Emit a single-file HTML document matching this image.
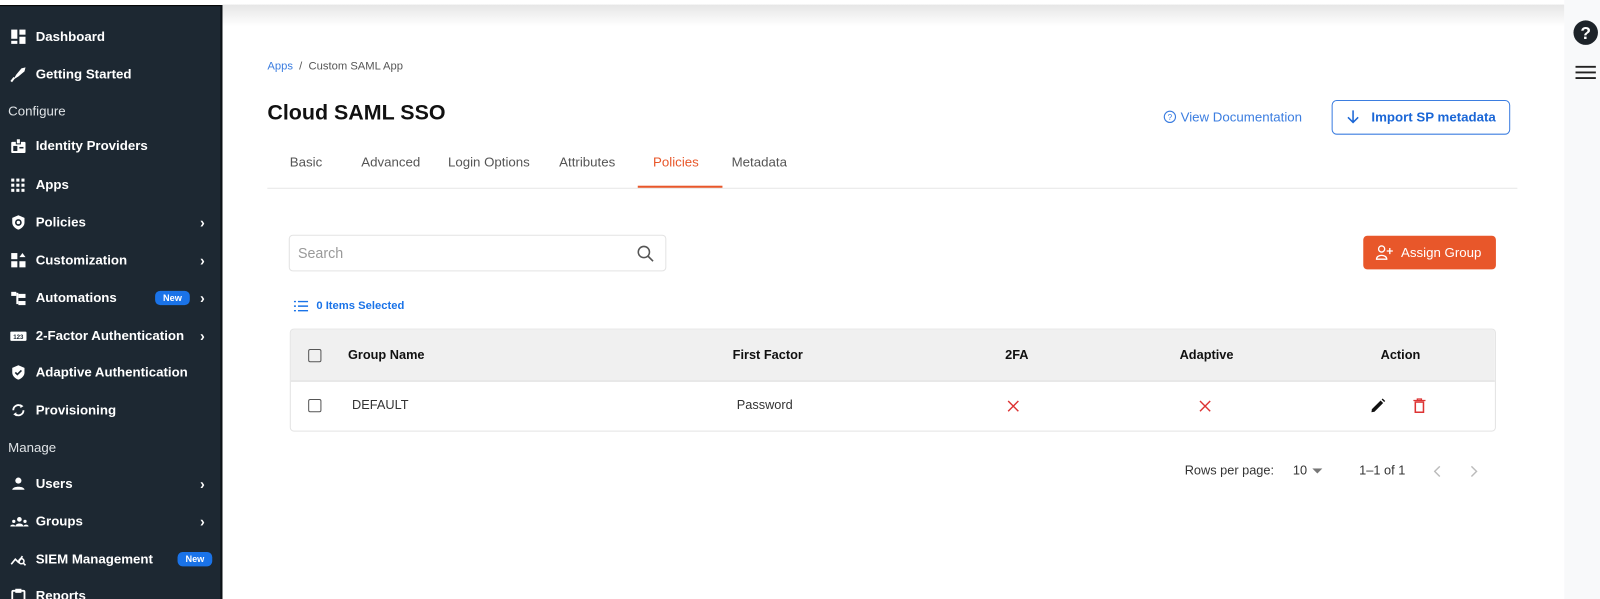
<!DOCTYPE html>
<html><head><meta charset="utf-8">
<style>
*{box-sizing:border-box;margin:0;padding:0}
html,body{width:1600px;height:599px;overflow:hidden;background:#fff}
body{font-family:"Liberation Sans",sans-serif;position:relative}
#w{position:absolute;left:0;top:0;width:1568px;height:587px;transform:scale(1.020408);transform-origin:0 0}
.topshadow{position:absolute;left:218px;top:0;width:1315px;height:28px;background:linear-gradient(#fff 0,#fff 4px,#e6e6e6 5px,#fff 26px)}
.side{position:absolute;left:0;top:5px;width:218px;height:594px;background:#1d2832;border-top:1px solid #000;border-right:2px solid #0c1116;color:#fff}
.it{position:absolute;left:0;width:216px;height:20px;font-size:13px;font-weight:bold;line-height:20px}
.it .t{position:absolute;left:35px;top:0}
.it svg{position:absolute;left:10px;top:2px}
.it .ch{position:absolute;left:196px;top:0;font-weight:bold;font-size:14px}
.sec{position:absolute;left:8px;font-size:13px;color:#dfe3e6}
.new{position:absolute;background:#1a73e8;color:#fff;font-size:9px;font-weight:bold;border-radius:5px;width:34px;height:14px;line-height:14px;text-align:center;top:3px}
.right{position:absolute;left:1533px;top:0;width:67px;height:599px;background:#f8f9fa}
.abs{position:absolute}
.tab{position:absolute;top:151px;font-size:13px;color:#555}
</style></head><body><div id="w">
<div class="topshadow"></div>
<div class="side">
 <div class="it" style="top:20px"><svg width="16" height="16"><rect x="1" y="1" width="6" height="9" fill="#fff"/><rect x="9" y="1" width="6" height="5" fill="#fff"/><rect x="1" y="12" width="6" height="3" fill="#fff"/><rect x="9" y="8" width="6" height="7" fill="#fff"/></svg><span class="t">Dashboard</span></div>
 <div class="it" style="top:57px"><svg width="16" height="16"><path d="M3 13 L6 8 L11 2 L15 1 L14 5 L8 10 Z" fill="#fff"/><path d="M1 15 L4 11" stroke="#fff" stroke-width="2"/></svg><span class="t">Getting Started</span></div>
 <div class="sec" style="top:95px">Configure</div>
 <div class="it" style="top:127px"><svg width="16" height="16"><rect x="1" y="4" width="14" height="11" rx="1" fill="#fff"/><rect x="6" y="1" width="4" height="5" fill="#fff" stroke="#1d2832"/><rect x="3" y="8" width="4" height="5" fill="#1d2832"/><rect x="9" y="9" width="4" height="1.5" fill="#1d2832"/></svg><span class="t">Identity Providers</span></div>
 <div class="it" style="top:165px"><svg width="16" height="16" fill="#fff"><rect x="1" y="2" width="3" height="3"/><rect x="6" y="2" width="3" height="3"/><rect x="11" y="2" width="3" height="3"/><rect x="1" y="7" width="3" height="3"/><rect x="6" y="7" width="3" height="3"/><rect x="11" y="7" width="3" height="3"/><rect x="1" y="12" width="3" height="3"/><rect x="6" y="12" width="3" height="3"/><rect x="11" y="12" width="3" height="3"/></svg><span class="t">Apps</span></div>
 <div class="it" style="top:202px"><svg width="16" height="16"><path d="M8 1 L14 3.5 V8 C14 11.5 11 14 8 15 C5 14 2 11.5 2 8 V3.5 Z" fill="#fff"/><circle cx="8" cy="8" r="2.5" fill="none" stroke="#1d2832" stroke-width="1.6"/></svg><span class="t">Policies</span><span class="ch">›</span></div>
 <div class="it" style="top:239px"><svg width="16" height="16" fill="#fff"><rect x="1" y="1" width="6" height="6"/><rect x="1" y="9" width="6" height="6"/><rect x="9" y="9" width="6" height="6"/><path d="M12 1 L15 5 L9 5 Z"/></svg><span class="t">Customization</span><span class="ch">›</span></div>
 <div class="it" style="top:276px"><svg width="16" height="16" fill="#fff"><rect x="1" y="2" width="5" height="4"/><rect x="8" y="4" width="7" height="4"/><rect x="8" y="11" width="7" height="4"/><rect x="6" y="3" width="2" height="11"/></svg><span class="t">Automations</span><span class="new" style="left:152px">New</span><span class="ch">›</span></div>
 <div class="it" style="top:313px"><svg width="16" height="16"><rect x="0" y="4" width="16" height="9" rx="1" fill="#fff"/><text x="8" y="11" font-size="6" text-anchor="middle" fill="#1d2832" font-family="Liberation Sans">123</text></svg><span class="t">2-Factor Authentication</span><span class="ch">›</span></div>
 <div class="it" style="top:349px"><svg width="16" height="16"><path d="M8 1 L14 3.5 V8 C14 11.5 11 14 8 15 C5 14 2 11.5 2 8 V3.5 Z" fill="#fff"/><path d="M5 8 L7 10 L11 6" stroke="#1d2832" stroke-width="1.6" fill="none"/></svg><span class="t">Adaptive Authentication</span></div>
 <div class="it" style="top:386px"><svg width="16" height="16"><path d="M3 8 A5 5 0 0 1 11 4 M13 8 A5 5 0 0 1 5 12" stroke="#fff" stroke-width="1.8" fill="none"/><path d="M10 2 L13 4 L10 6Z M6 10 L3 12 L6 14Z" fill="#fff"/></svg><span class="t">Provisioning</span></div>
 <div class="sec" style="top:425px">Manage</div>
 <div class="it" style="top:458px"><svg width="16" height="16" fill="#fff"><circle cx="8" cy="5" r="3"/><path d="M2 14 C2 10 14 10 14 14Z"/></svg><span class="t">Users</span><span class="ch">›</span></div>
 <div class="it" style="top:495px"><svg width="18" height="16" fill="#fff"><circle cx="9" cy="6" r="2.3"/><circle cx="3.5" cy="8" r="1.6"/><circle cx="14.5" cy="8" r="1.6"/><path d="M5 13 C5 9 13 9 13 13Z M0 13 C0 10.5 5 10.5 5 13Z M13 13 C13 10.5 18 10.5 18 13Z"/></svg><span class="t">Groups</span><span class="ch">›</span></div>
 <div class="it" style="top:532px"><svg width="16" height="16"><path d="M1 13 L5 8 L8 11 L12 5" stroke="#fff" stroke-width="1.6" fill="none"/><circle cx="11" cy="10" r="2.5" stroke="#fff" stroke-width="1.5" fill="none"/><path d="M13 12 L15 14" stroke="#fff" stroke-width="1.6"/></svg><span class="t">SIEM Management</span><span class="new" style="left:174px">New</span></div>
 <div class="it" style="top:568px"><svg width="16" height="16"><rect x="2" y="3" width="12" height="13" rx="1" stroke="#fff" stroke-width="1.8" fill="none"/><rect x="5" y="1" width="6" height="4" fill="#fff"/></svg><span class="t">Reports</span></div>
</div>

<div class="right">
 <svg class="abs" style="left:8px;top:19px" width="26" height="26"><circle cx="13" cy="13" r="12" fill="#1d2329"/><text x="13" y="19" font-size="17" font-weight="bold" fill="#fff" text-anchor="middle" font-family="Liberation Sans">?</text></svg>
 <svg class="abs" style="left:11px;top:64px" width="20" height="14"><path d="M0 1.5H20M0 7H20M0 12.5H20" stroke="#222" stroke-width="1.8"/></svg>
</div>

<div class="abs" style="left:262px;top:59px;font-size:11px;color:#555"><span style="color:#3b7de0">Apps</span>&nbsp; / &nbsp;Custom SAML App</div>
<div class="abs" style="left:262px;top:99px;font-size:21px;font-weight:bold;color:#111">Cloud SAML SSO</div>

<div class="abs" style="left:1140px;top:107px;font-size:13px;color:#3b7de0;display:flex;align-items:center"><svg width="13" height="13" style="margin-right:4px"><circle cx="6.5" cy="6.5" r="5.5" stroke="#3b7de0" stroke-width="1.1" fill="none"/><text x="6.5" y="9.5" font-size="8" text-anchor="middle" fill="#3b7de0" font-family="Liberation Sans">?</text></svg>View Documentation</div>
<div class="abs" style="left:1305px;top:98px;width:175px;height:34px;border:1px solid #3b7de0;border-radius:5px;color:#1a66d6;font-size:13px;font-weight:bold;line-height:32px;padding-left:38px">Import SP metadata<svg class="abs" style="left:14px;top:9px" width="12" height="14"><path d="M6 0V12M1 7L6 12L11 7" stroke="#1a66d6" stroke-width="1.5" fill="none"/></svg></div>

<div class="tab" style="left:284px">Basic</div>
<div class="tab" style="left:354px">Advanced</div>
<div class="tab" style="left:439px">Login Options</div>
<div class="tab" style="left:548px">Attributes</div>
<div class="tab" style="left:640px;color:#e8572a">Policies</div>
<div class="tab" style="left:717px">Metadata</div>
<div class="abs" style="left:262px;top:184px;width:1225px;height:1px;background:#e6e6e6"></div>
<div class="abs" style="left:625px;top:182px;width:83px;height:2px;background:#e8572a"></div>

<div class="abs" style="left:283px;top:230px;width:370px;height:36px;border:1px solid #e3e3e3;border-radius:4px;font-size:14px;color:#9a9a9a;line-height:34px;padding-left:8px">Search<svg class="abs" style="left:340px;top:9px" width="17" height="17"><circle cx="7" cy="7" r="5.5" stroke="#555" stroke-width="1.5" fill="none"/><path d="M11 11L16 16" stroke="#555" stroke-width="1.6"/></svg></div>
<div class="abs" style="left:1336px;top:231px;width:130px;height:33px;background:#e8572a;border-radius:4px;color:#fff;font-size:13px;line-height:33px;padding-left:37px">Assign Group<svg class="abs" style="left:12px;top:9px" width="18" height="15"><circle cx="6" cy="4" r="3" stroke="#fff" stroke-width="1.3" fill="none"/><path d="M1 14C1 9 11 9 11 14Z" stroke="#fff" stroke-width="1.3" fill="none"/><path d="M14 3V9M11 6H17" stroke="#fff" stroke-width="1.3"/></svg></div>

<div class="abs" style="left:288px;top:294px;font-size:11px;font-weight:bold;color:#1a73e8;display:flex;align-items:center"><svg width="14" height="12" style="margin-right:8px"><path d="M0 1.5H2M0 6H2M0 10.5H2M4 1.5H14M4 6H14M4 10.5H14" stroke="#1a73e8" stroke-width="1.4"/></svg>0 Items Selected</div>

<div class="abs" style="left:284px;top:322px;width:1182px;height:101px;border:1px solid #e3e3e3;border-radius:4px;overflow:hidden">
 <div style="height:51px;background:#f0f0f0;border-bottom:1px solid #dcdcdc;position:relative;font-size:12.5px;font-weight:bold;color:#111">
  <div class="abs" style="left:17px;top:19px;width:13px;height:13px;border:1.5px solid #555;border-radius:2px"></div>
  <div class="abs" style="left:56px;top:18px">Group Name</div>
  <div class="abs" style="left:433px;top:18px">First Factor</div>
  <div class="abs" style="left:700px;top:18px">2FA</div>
  <div class="abs" style="left:871px;top:18px">Adaptive</div>
  <div class="abs" style="left:1068px;top:18px">Action</div>
 </div>
 <div style="position:relative;height:48px;font-size:12.5px;color:#333">
  <div class="abs" style="left:17px;top:17px;width:13px;height:13px;border:1.5px solid #555;border-radius:2px"></div>
  <div class="abs" style="left:60px;top:16px">DEFAULT</div>
  <div class="abs" style="left:437px;top:16px">Password</div>
  <svg class="abs" style="left:702px;top:18px" width="12" height="12"><path d="M1 1L11 11M11 1L1 11" stroke="#d33" stroke-width="1.4"/></svg>
  <svg class="abs" style="left:890px;top:18px" width="12" height="12"><path d="M1 1L11 11M11 1L1 11" stroke="#d33" stroke-width="1.4"/></svg>
  <svg class="abs" style="left:1058px;top:16px" width="15" height="15"><path d="M1 14L1.5 11L10 2.5L12.5 5L4 13.5Z" fill="#111"/><path d="M11 1.5L12 0.5L14.5 3L13.5 4Z" fill="#111"/></svg>
  <svg class="abs" style="left:1100px;top:16px" width="12" height="15"><path d="M0 2.5H12M4 2.5V1H8V2.5" stroke="#d33" stroke-width="1.3" fill="none"/><rect x="2" y="4" width="8" height="10" stroke="#d33" stroke-width="1.5" fill="none"/></svg>
 </div>
</div>

<div class="abs" style="left:1161px;top:454px;font-size:12.5px;color:#333">Rows per page:</div>
<div class="abs" style="left:1267px;top:454px;font-size:12.5px;color:#333">10</div>
<svg class="abs" style="left:1286px;top:459px" width="10" height="6"><path d="M0 0H10L5 5Z" fill="#777"/></svg>
<div class="abs" style="left:1332px;top:454px;font-size:12.5px;color:#333">1–1 of 1</div>
<svg class="abs" style="left:1405px;top:456px" width="8" height="12"><path d="M6 1L1 6L6 11" stroke="#bbb" stroke-width="1.4" fill="none"/></svg>
<svg class="abs" style="left:1441px;top:456px" width="8" height="12"><path d="M1 1L6 6L1 11" stroke="#bbb" stroke-width="1.4" fill="none"/></svg>
</div></body></html>
